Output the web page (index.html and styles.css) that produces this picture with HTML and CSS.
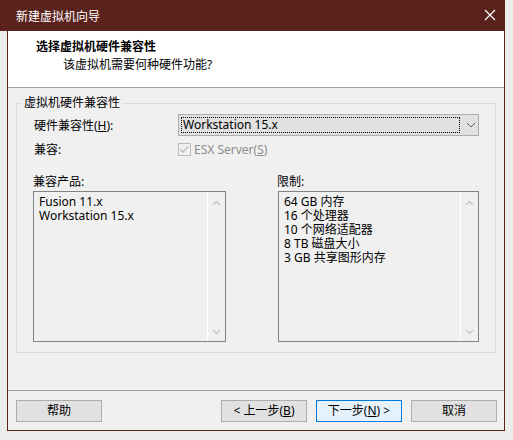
FILE: index.html
```html
<!DOCTYPE html>
<html lang="zh-CN">
<head>
  <meta charset="UTF-8" />
  <title>新建虚拟机向导</title>
  <link rel="stylesheet" href="styles.css">
</head>
<body>
  <div class="window">
    <div class="titlebar">
      <span>新建虚拟机向导</span>
      <svg class="close" width="12" height="12" viewBox="0 0 12 12">
        <path d="M1 1 L11 11 M11 1 L1 11" stroke="#fff" stroke-width="1.2" fill="none"/>
      </svg>
    </div>

    <div class="frame">
      <!-- 标题区 -->
      <div class="header">
        <h1>选择虚拟机硬件兼容性</h1>
        <p>该虚拟机需要何种硬件功能?</p>
      </div>

      <div class="content">
        <fieldset class="group">
          <legend>虚拟机硬件兼容性</legend>

          <div class="row row-combo">
            <label class="label">硬件兼容性(<u>H</u>):</label>
            <div class="combo">
              <div class="combo-focus">Workstation 15.x</div>
              <svg class="chevron" width="10" height="6" viewBox="0 0 10 6">
                <path d="M1 1 L5 5 L9 1" stroke="#606060" stroke-width="1" fill="none"/>
              </svg>
            </div>
          </div>

          <div class="row row-check">
            <span class="label">兼容:</span>
            <span class="check">
              <svg width="13" height="13" viewBox="0 0 13 13">
                <rect x="0.5" y="0.5" width="12" height="12" fill="#f0f0f0" stroke="#bcbcbc"/>
                <path d="M2.5 6.5 L5 9 L10.5 3.5" stroke="#bcbcbc" stroke-width="1.4" fill="none"/>
              </svg>
            </span>
            <span class="check-text">ESX Server(<u>S</u>)</span>
          </div>

          <div class="lists">
            <div class="list-col list-left">
              <div class="list-title">兼容产品:</div>
              <div class="listbox">
                <div class="list-items">
                  <div>Fusion 11.x</div>
                  <div>Workstation 15.x</div>
                </div>
                <div class="scroll">
                  <svg width="9" height="6" viewBox="0 0 9 6"><path d="M1 5 L4.5 1.5 L8 5" stroke="#c8c8c8" stroke-width="1.5" fill="none"/></svg>
                  <svg width="9" height="6" viewBox="0 0 9 6"><path d="M1 1 L4.5 4.5 L8 1" stroke="#c8c8c8" stroke-width="1.5" fill="none"/></svg>
                </div>
              </div>
            </div>
            <div class="list-col list-right">
              <div class="list-title">限制:</div>
              <div class="listbox">
                <div class="list-items">
                  <div>64 GB 内存</div>
                  <div>16 个处理器</div>
                  <div>10 个网络适配器</div>
                  <div>8 TB 磁盘大小</div>
                  <div>3 GB 共享图形内存</div>
                </div>
                <div class="scroll">
                  <svg width="9" height="6" viewBox="0 0 9 6"><path d="M1 5 L4.5 1.5 L8 5" stroke="#c8c8c8" stroke-width="1.5" fill="none"/></svg>
                  <svg width="9" height="6" viewBox="0 0 9 6"><path d="M1 1 L4.5 4.5 L8 1" stroke="#c8c8c8" stroke-width="1.5" fill="none"/></svg>
                </div>
              </div>
            </div>
          </div>
        </fieldset>

        <div class="footer">
          <button class="btn">帮助</button>
          <div class="nav-btns">
            <button class="btn">&lt; 上一步(<u>B</u>)</button>
            <button class="btn btn-default">下一步(<u>N</u>) &gt;</button>
            <button class="btn">取消</button>
          </div>
        </div>
      </div>
    </div>
  </div>
</body>
</html>
```

FILE: styles.css
```css
body {
  margin: 0;
  padding: 0;
  width: 513px;
  height: 440px;
  overflow: hidden;
  background: #ececec;
  font-family: "Noto Sans", "Noto Sans CJK SC", sans-serif;
  font-size: 12px;
  color: #000;
}
.window {
  width: 505px;
}
.titlebar {
  height: 31px;
  background: #5a221c;
  color: #fff;
  display: flex;
  align-items: center;
  justify-content: space-between;
  padding: 0 9px 0 16px;
  box-sizing: border-box;
}
.close {
  margin-top: -2px;
}
.frame {
  margin-left: 7px;
  border: 1px solid #5a221c;
  border-top: none;
  background: #f0f0f0;
}
.header {
  height: 56px;
  background: #fff;
  border-bottom: 1px solid #a0a0a0;
  padding-left: 28px;
}
.header h1 {
  margin: 0;
  padding-top: 7px;
  font-size: 12px;
  font-weight: bold;
  line-height: 17px;
}
.header p {
  margin: 1px 0 0 27px;
  line-height: 17px;
}
.content {
  padding-top: 7px;
}
.group {
  margin: 0 8px;
  padding: 3px 16px 10px 17px;
  border: 1px solid #dcdcdc;
  min-width: 0;
}
.group legend {
  margin-left: -12px;
  padding: 0 2px;
  line-height: 16px;
}
.row {
  display: flex;
  align-items: center;
}
.label {
  width: 144px;
  flex-shrink: 0;
}
.row-combo {
  height: 22px;
}
.combo {
  width: 301px;
  height: 22px;
  box-sizing: border-box;
  border: 1px solid #adadad;
  background: #e1e1e1;
  display: flex;
  align-items: center;
  padding: 2px;
}
.combo-focus {
  width: 279px;
  height: 16px;
  box-sizing: border-box;
  border: 1px dotted #000;
  line-height: 14px;
  padding-left: 1px;
}
.chevron {
  margin-left: 6px;
}
.row-check {
  height: 18px;
  margin-top: 4px;
}
.check {
  display: flex;
  width: 16px;
}
.check-text {
  color: #8d8d8d;
}
.lists {
  display: flex;
  justify-content: space-between;
  margin-top: 16px;
}
.list-left {
  width: 193px;
  margin-left: -1px;
}
.list-right {
  width: 201px;
}
.list-title {
  line-height: 16px;
  height: 17px;
}
.list-right .list-title {
  margin-left: -1px;
}
.listbox {
  height: 151px;
  box-sizing: border-box;
  border: 1px solid #828282;
  background: #f0f0f0;
  display: flex;
}
.list-items {
  flex: 1;
  padding: 3px 0 0 5px;
  line-height: 14px;
}
.scroll {
  width: 17px;
  border-left: 1px solid #fff;
  display: flex;
  flex-direction: column;
  justify-content: space-between;
  align-items: center;
  padding: 8px 0 6px;
}
.footer {
  margin-top: 37px;
  border-top: 1px solid #a0a0a0;
  padding: 9px 7px 8px 8px;
  display: flex;
  justify-content: space-between;
}
.nav-btns {
  display: flex;
  gap: 9px;
}
.btn {
  width: 86px;
  height: 22px;
  border: 1px solid #adadad;
  background: #e1e1e1;
  font-family: "Noto Sans", "Noto Sans CJK SC", sans-serif;
  font-size: 12px;
  color: #000;
  padding: 0;
  line-height: 18px;
}
.btn-default {
  border-color: #0078d7;
  background: #e5f1fb;
}
```
